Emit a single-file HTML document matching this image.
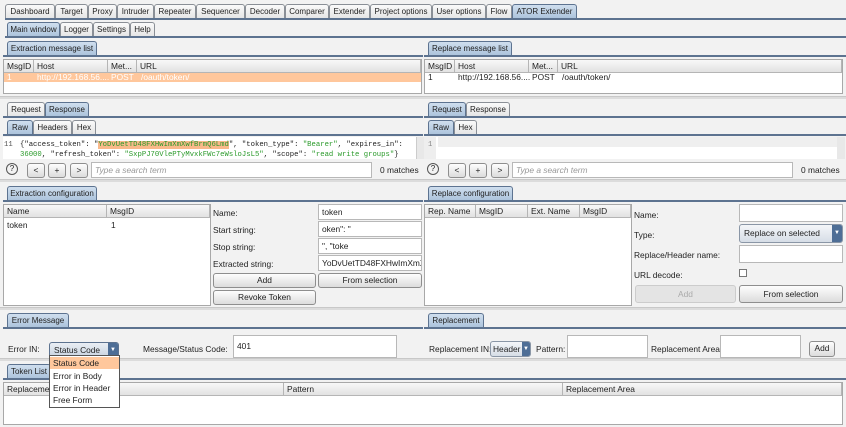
<!DOCTYPE html>
<html><head><meta charset="utf-8"><style>
*{box-sizing:border-box;margin:0;padding:0}
body{width:846px;height:427px;background:#f2f2f2;font-family:"Liberation Sans",sans-serif;font-size:8.4px;color:#222;position:relative;overflow:hidden}
div,span{position:absolute;white-space:nowrap}
.t{height:15px;border:1px solid #8a8f96;border-bottom:none;border-radius:3px 3px 0 0;background:linear-gradient(#fafafa,#e4e4e4);line-height:13px;text-align:center;font-size:8px;overflow:hidden}
.s{background:linear-gradient(#cfdeee,#aac2db);border-color:#5d7390}
.ln{height:2px;background:#5d7390}
.in{background:#fff;border:1px solid #b8b8b8;height:16px;padding-left:3px;line-height:14px;overflow:hidden}
.b{border:1px solid #8e8e8e;border-radius:3px;background:linear-gradient(#fdfdfd,#dcdcdc);text-align:center;line-height:13px;height:15px}
.tb{background:#fff;border:1px solid #a8a8a8}
.th{top:0;height:13px;background:linear-gradient(#f8f8f8,#e2e2e2);border-right:1px solid #b5b5b5;border-bottom:1px solid #b5b5b5;line-height:12px;padding-left:3px;overflow:hidden}
.sp{height:3px;background:#dcdcdc;border-top:1px solid #c8c8c8}
.m{font-family:"Liberation Mono",monospace;font-size:7.25px}
.g{color:#2a9a2a}
.m span{position:static}
.dd{border:1px solid #5d7390;border-radius:3px;background:linear-gradient(#e9eef4,#c9d4e1);height:16px;line-height:14px;padding-left:4px;overflow:hidden}
.ar{right:0;top:0;width:10px;height:100%;background:#4e6e96;color:#fff;font-size:6px;text-align:center;line-height:14px}
</style></head><body>
<div class="t" style="left:5px;top:4px;width:50px">Dashboard</div>
<div class="t" style="left:55px;top:4px;width:33px">Target</div>
<div class="t" style="left:88px;top:4px;width:29px">Proxy</div>
<div class="t" style="left:117px;top:4px;width:37px">Intruder</div>
<div class="t" style="left:154px;top:4px;width:42px">Repeater</div>
<div class="t" style="left:196px;top:4px;width:49px">Sequencer</div>
<div class="t" style="left:245px;top:4px;width:40px">Decoder</div>
<div class="t" style="left:285px;top:4px;width:44px">Comparer</div>
<div class="t" style="left:329px;top:4px;width:41px">Extender</div>
<div class="t" style="left:370px;top:4px;width:62px">Project options</div>
<div class="t" style="left:432px;top:4px;width:54px">User options</div>
<div class="t" style="left:486px;top:4px;width:26px">Flow</div>
<div class="t s" style="left:512px;top:4px;width:65px">ATOR Extender</div>
<div class="ln" style="left:5px;top:18px;width:841px"></div>
<div class="t s" style="left:7px;top:22px;width:53px">Main window</div>
<div class="t" style="left:60px;top:22px;width:33px">Logger</div>
<div class="t" style="left:93px;top:22px;width:37px">Settings</div>
<div class="t" style="left:130px;top:22px;width:25px">Help</div>
<div class="ln" style="left:5px;top:36px;width:841px"></div>
<div class="t s" style="left:7px;top:41px;width:90px">Extraction message list</div>
<div class="ln" style="left:3px;top:55px;width:420px"></div>
<div class="tb" style="left:3px;top:59px;width:419px;height:35px">
 <div class="th" style="left:0;width:30px">MsgID</div>
 <div class="th" style="left:30px;width:74px">Host</div>
 <div class="th" style="left:104px;width:29px">Met...</div>
 <div class="th" style="left:133px;width:284px">URL</div>
 <div style="left:0;top:13px;width:417px;height:9px;background:#ffc79c;color:#fff;line-height:9px">
  <span style="left:3px">1</span><span style="left:33px">http://192.168.56....</span><span style="left:107px">POST</span><span style="left:137px">/oauth/token/</span></div>
</div>
<div class="t s" style="left:428px;top:41px;width:84px">Replace message list</div>
<div class="ln" style="left:424px;top:55px;width:422px"></div>
<div class="tb" style="left:424px;top:59px;width:419px;height:35px">
 <div class="th" style="left:0;width:30px">MsgID</div>
 <div class="th" style="left:30px;width:74px">Host</div>
 <div class="th" style="left:104px;width:29px">Met...</div>
 <div class="th" style="left:133px;width:284px">URL</div>
 <div style="left:0;top:13px;width:417px;height:9px;line-height:9px">
  <span style="left:3px">1</span><span style="left:33px">http://192.168.56....</span><span style="left:107px">POST</span><span style="left:137px">/oauth/token/</span></div>
</div>
<div class="sp" style="left:0;top:96px;width:846px"></div>
<div class="t" style="left:7px;top:102px;width:38px">Request</div>
<div class="t s" style="left:45px;top:102px;width:44px">Response</div>
<div class="ln" style="left:3px;top:116px;width:420px"></div>
<div class="t s" style="left:7px;top:120px;width:26px">Raw</div>
<div class="t" style="left:33px;top:120px;width:39px">Headers</div>
<div class="t" style="left:72px;top:120px;width:24px">Hex</div>
<div class="ln" style="left:3px;top:134px;width:420px"></div>
<div style="left:3px;top:137px;width:413px;height:22px;background:#fff"></div>
<div class="m" style="left:4px;top:141px;color:#555">11</div>
<div class="m" style="left:20px;top:141px">{"access_token": "<span style="background:#f9b98a;color:#2a9a2a">YoDvUetTD48FXHwImXmXwfBrmQ6Lmd</span>", "token_type": <span class="g">"Bearer"</span>, "expires_in":</div>
<div class="m" style="left:20px;top:151px"><span class="g">36000</span>, "refresh_token": <span class="g">"SxpPJ70VlePTyMvxkFWc7eWsloJsL5"</span>, "scope": <span class="g">"read write groups"</span>}</div>
<div style="left:416px;top:137px;width:8px;height:22px;background:#e8e8e8;border-left:1px solid #ccc"></div>
<div style="left:6px;top:163px;width:12px;height:12px;border:1px solid #555;border-radius:50%;text-align:center;line-height:10px;font-size:8px">?</div>
<div class="b" style="left:27px;top:163px;width:18px">&lt;</div>
<div class="b" style="left:48px;top:163px;width:18px">+</div>
<div class="b" style="left:70px;top:163px;width:18px">&gt;</div>
<div class="in" style="left:91px;top:162px;width:281px;color:#999;font-style:italic">Type a search term</div>
<div style="left:380px;top:165px">0 matches</div>
<div class="t s" style="left:428px;top:102px;width:38px">Request</div>
<div class="t" style="left:466px;top:102px;width:44px">Response</div>
<div class="ln" style="left:424px;top:116px;width:422px"></div>
<div class="t s" style="left:428px;top:120px;width:26px">Raw</div>
<div class="t" style="left:454px;top:120px;width:23px">Hex</div>
<div class="ln" style="left:424px;top:134px;width:422px"></div>
<div style="left:424px;top:137px;width:413px;height:22px;background:#fff"></div>
<div style="left:424px;top:137px;width:12px;height:22px;background:#eee"></div>
<div style="left:438px;top:137px;width:399px;height:10px;background:#efefef"></div>
<div class="m" style="left:428px;top:141px;color:#888">1</div>
<div style="left:837px;top:137px;width:8px;height:22px;background:#e8e8e8"></div>
<div style="left:427px;top:163px;width:12px;height:12px;border:1px solid #555;border-radius:50%;text-align:center;line-height:10px;font-size:8px">?</div>
<div class="b" style="left:448px;top:163px;width:18px">&lt;</div>
<div class="b" style="left:469px;top:163px;width:18px">+</div>
<div class="b" style="left:491px;top:163px;width:18px">&gt;</div>
<div class="in" style="left:512px;top:162px;width:281px;color:#999;font-style:italic">Type a search term</div>
<div style="left:801px;top:165px">0 matches</div>
<div class="sp" style="left:0;top:179px;width:846px"></div>
<div class="t s" style="left:7px;top:186px;width:90px">Extraction configuration</div>
<div class="ln" style="left:3px;top:200px;width:420px"></div>
<div class="tb" style="left:3px;top:204px;width:208px;height:102px">
 <div class="th" style="left:0;width:103px">Name</div>
 <div class="th" style="left:103px;width:103px">MsgID</div>
 <span style="left:3px;top:15px">token</span><span style="left:107px;top:15px">1</span>
</div>
<div style="left:213px;top:208px">Name:</div>
<div style="left:213px;top:225px">Start string:</div>
<div style="left:213px;top:242px">Stop string:</div>
<div style="left:213px;top:259px">Extracted string:</div>
<div class="in" style="left:318px;top:204px;width:104px">token</div>
<div class="in" style="left:318px;top:221px;width:104px">oken": "</div>
<div class="in" style="left:318px;top:238px;width:104px">", "toke</div>
<div class="in" style="left:318px;top:255px;width:104px">YoDvUetTD48FXHwImXmXw</div>
<div class="b" style="left:213px;top:273px;width:103px">Add</div>
<div class="b" style="left:318px;top:273px;width:104px">From selection</div>
<div class="b" style="left:213px;top:290px;width:103px">Revoke Token</div>
<div class="t s" style="left:428px;top:186px;width:85px">Replace configuration</div>
<div class="ln" style="left:424px;top:200px;width:422px"></div>
<div class="tb" style="left:424px;top:204px;width:208px;height:102px">
 <div class="th" style="left:0;width:51px">Rep. Name</div>
 <div class="th" style="left:51px;width:52px">MsgID</div>
 <div class="th" style="left:103px;width:52px">Ext. Name</div>
 <div class="th" style="left:155px;width:51px">MsgID</div>
</div>
<div style="left:634px;top:210px">Name:</div>
<div style="left:634px;top:230px">Type:</div>
<div style="left:634px;top:250px">Replace/Header name:</div>
<div style="left:634px;top:270px">URL decode:</div>
<div class="in" style="left:739px;top:204px;width:104px;height:18px"></div>
<div class="dd" style="left:739px;top:224px;width:104px;height:19px;line-height:17px;border-color:#8a96a6;background:linear-gradient(#f4f6f9,#d6dde6)">Replace on selected<span class="ar" style="line-height:17px">▼</span></div>
<div class="in" style="left:739px;top:245px;width:104px;height:18px"></div>
<div style="left:739px;top:269px;width:8px;height:8px;border:1px solid #777;background:#fff"></div>
<div class="b" style="left:635px;top:285px;width:101px;height:18px;line-height:16px;color:#aaa;background:#e4e4e4;border-color:#ccc">Add</div>
<div class="b" style="left:739px;top:285px;width:104px;height:18px;line-height:16px">From selection</div>
<div class="sp" style="left:0;top:307px;width:846px"></div>
<div class="t s" style="left:7px;top:313px;width:62px">Error Message</div>
<div class="ln" style="left:3px;top:327px;width:420px"></div>
<div style="left:8px;top:344px">Error IN:</div>
<div class="dd" style="left:49px;top:342px;width:70px">Status Code<span class="ar">▼</span></div>
<div style="left:143px;top:344px">Message/Status Code:</div>
<div class="in" style="left:233px;top:335px;width:164px;height:23px;line-height:21px">401</div>
<div class="t s" style="left:428px;top:313px;width:56px">Replacement</div>
<div class="ln" style="left:424px;top:327px;width:422px"></div>
<div style="left:429px;top:344px">Replacement IN:</div>
<div class="dd" style="left:490px;top:341px;width:41px;padding-left:2px;border-color:#8a96a6;background:linear-gradient(#f4f6f9,#d6dde6)">Header<span class="ar" style="width:8px">▼</span></div>
<div style="left:536px;top:344px">Pattern:</div>
<div class="in" style="left:567px;top:335px;width:81px;height:23px"></div>
<div style="left:651px;top:344px">Replacement Area</div>
<div class="in" style="left:720px;top:335px;width:81px;height:23px"></div>
<div class="b" style="left:809px;top:341px;width:26px;height:16px">Add</div>
<div class="sp" style="left:0;top:358px;width:846px"></div>
<div class="t s" style="left:7px;top:364px;width:44px">Token List</div>
<div class="ln" style="left:3px;top:378px;width:843px"></div>
<div class="tb" style="left:3px;top:382px;width:840px;height:43px">
 <div class="th" style="left:0;width:280px">Replacement</div>
 <div class="th" style="left:280px;width:279px">Pattern</div>
 <div class="th" style="left:559px;width:279px">Replacement Area</div>
</div>
<div style="left:49px;top:355px;width:71px;height:53px;background:#fff;border:1px solid #555">
 <div style="left:0;top:1px;width:69px;height:12px;background:#ffc79c;padding-left:3px;line-height:12px">Status Code</div>
 <div style="left:3px;top:14px;line-height:12px">Error in Body</div>
 <div style="left:3px;top:26px;line-height:12px">Error in Header</div>
 <div style="left:3px;top:38px;line-height:12px">Free Form</div>
</div>
</body></html>
